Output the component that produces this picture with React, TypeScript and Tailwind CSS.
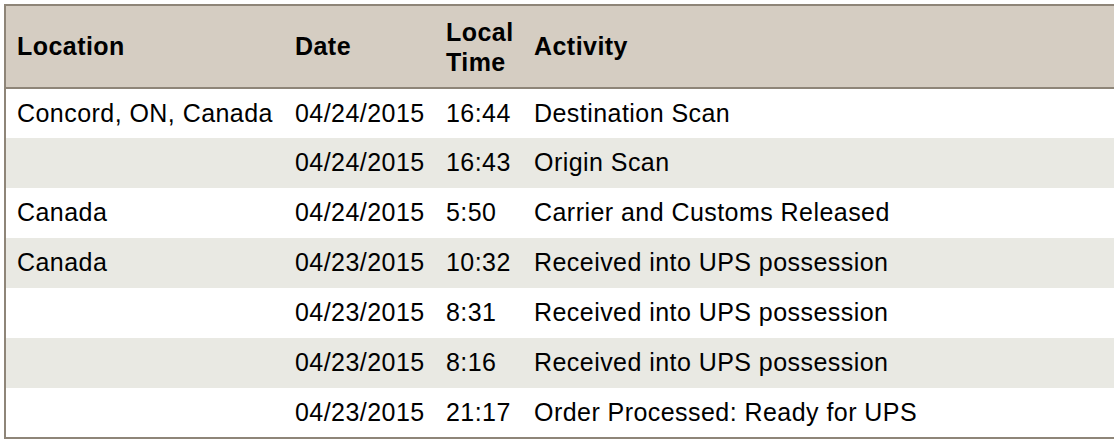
import React from "react";

const rows = [
  ["Concord, ON, Canada", "04/24/2015", "16:44", "Destination Scan"],
  ["", "04/24/2015", "16:43", "Origin Scan"],
  ["Canada", "04/24/2015", "5:50", "Carrier and Customs Released"],
  ["Canada", "04/23/2015", "10:32", "Received into UPS possession"],
  ["", "04/23/2015", "8:31", "Received into UPS possession"],
  ["", "04/23/2015", "8:16", "Received into UPS possession"],
  ["", "04/23/2015", "21:17", "Order Processed: Ready for UPS"],
];

export default function App() {
  return (
    <div className="w-[1114px] h-[440px] overflow-hidden bg-white pt-[4px] pl-[4px] font-['Liberation_Sans',Arial,sans-serif] text-[25px] tracking-[0.45px] text-black">
      <table className="w-[1130px] border-collapse border-2 border-[#8e8578] table-fixed">
        <colgroup>
          <col className="w-[279px]" />
          <col className="w-[151px]" />
          <col className="w-[88px]" />
          <col />
        </colgroup>
        <thead>
          <tr className="h-[83px] bg-[#d5cdc2] border-b-2 border-[#8e8578]">
            <th className="text-left font-bold pl-[11px] align-middle">Location</th>
            <th className="text-left font-bold pl-[11px] align-middle">Date</th>
            <th className="text-left font-bold pl-[11px] align-middle leading-[30px]">Local<br />Time</th>
            <th className="text-left font-bold pl-[11px] align-middle">Activity</th>
          </tr>
        </thead>
        <tbody>
          {rows.map((r, i) => (
            <tr key={i} className={`h-[50px] ${i % 2 === 1 ? "bg-[#e9e9e3]" : "bg-white"}`}>
              {r.map((c, j) => (
                <td key={j} className="pl-[11px] align-middle whitespace-nowrap">{c}</td>
              ))}
            </tr>
          ))}
        </tbody>
      </table>
    </div>
  );
}
